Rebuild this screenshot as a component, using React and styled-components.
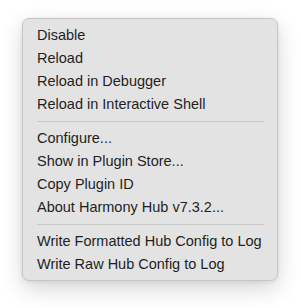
import React from "react";
import styled, { createGlobalStyle } from "styled-components";

const Global = createGlobalStyle`
  html, body { margin: 0; padding: 0; background: #ffffff; }
  body { width: 301px; height: 308px; overflow: hidden; }
`;

const Page = styled.div`
  width: 301px;
  height: 308px;
  box-sizing: border-box;
  padding: 18px 0 0 22px;
  background: #ffffff;
`;

const Menu = styled.div`
  width: 256px;
  box-sizing: border-box;
  padding: 4.5px 0;
  background: #e3e3e3;
  border: 1px solid #c6c6c6;
  border-radius: 7px;
  box-shadow: 0 8px 22px rgba(0, 0, 0, 0.16), 0 1px 4px rgba(0, 0, 0, 0.08);
  font-family: "Liberation Sans", Arial, sans-serif;
  font-size: 14.5px;
  color: #1f1f1f;
`;

const Item = styled.div`
  height: 23px;
  line-height: 23px;
  padding: 0 14px;
  white-space: nowrap;
`;

const Separator = styled.div`
  height: 11px;
  display: flex;
  align-items: center;
  padding: 0 13px 0 14px;
  &::after {
    content: "";
    flex: 1;
    height: 1px;
    background: #c8c8c8;
  }
`;

const groups = [
  ["Disable", "Reload", "Reload in Debugger", "Reload in Interactive Shell"],
  ["Configure...", "Show in Plugin Store...", "Copy Plugin ID", "About Harmony Hub v7.3.2..."],
  ["Write Formatted Hub Config to Log", "Write Raw Hub Config to Log"],
];

export default function App() {
  return (
    <>
      <Global />
      <Page>
        <Menu>
          {groups.map((g, gi) => (
            <React.Fragment key={gi}>
              {gi > 0 && <Separator />}
              {g.map((label) => (
                <Item key={label}>{label}</Item>
              ))}
            </React.Fragment>
          ))}
        </Menu>
      </Page>
    </>
  );
}
